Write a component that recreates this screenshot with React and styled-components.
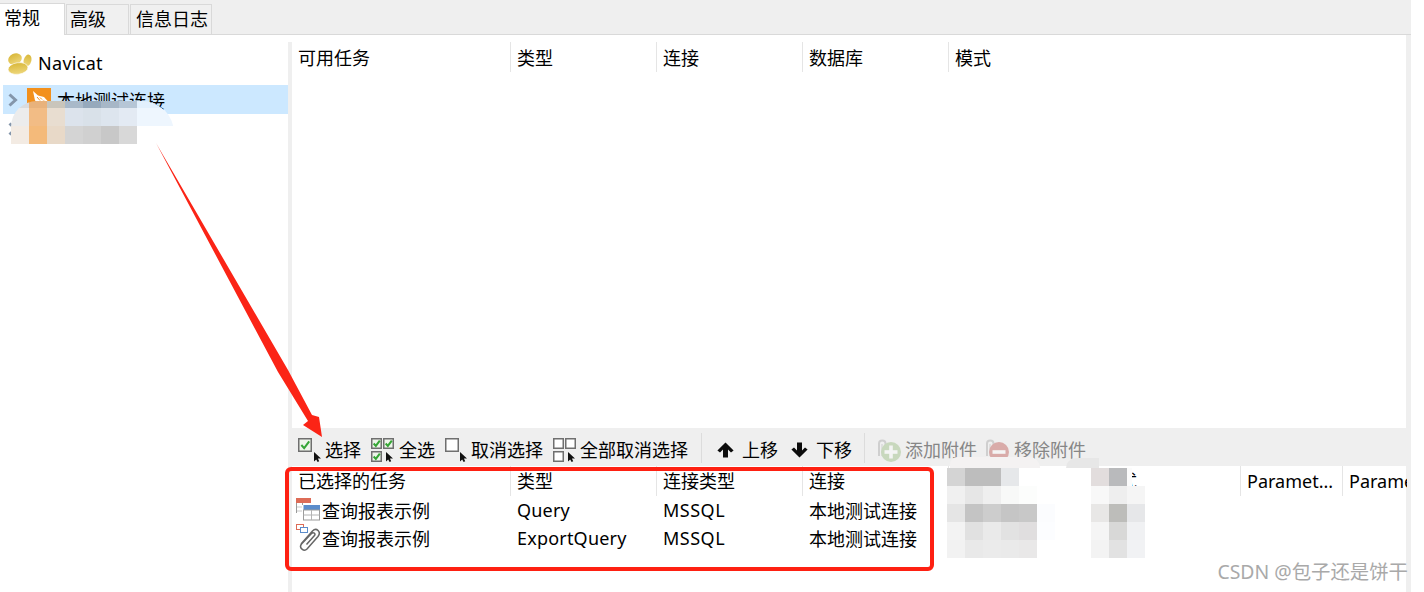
import React from 'react';
import styled, { createGlobalStyle } from 'styled-components';

const GlobalStyle = createGlobalStyle`
  html, body {
    margin: 0;
    padding: 0;
    background: #fff;
  }
  body {
    font-family: "Noto Sans", "Noto Sans CJK SC", sans-serif;
    font-size: 18px;
    color: #000;
  }
`;

const Page = styled.div`
  position: relative;
  width: 1424px;
  height: 592px;
  overflow: hidden;
  background: #fff;
`;

const Window = styled.div`
  width: 1411px;
  height: 592px;
  display: flex;
  flex-direction: column;
  background: #efefef;
`;

const TabBar = styled.div`
  height: 35px;
  box-sizing: border-box;
  display: flex;
  align-items: flex-end;
  border-bottom: 1px solid #d9d9d9;
`;

const Tab = styled.div`
  box-sizing: border-box;
  width: ${(p) => p.$width}px;
  height: ${(p) => (p.$active ? 32 : 30)}px;
  margin-bottom: ${(p) => (p.$active ? -1 : 0)}px;
  padding-left: ${(p) => p.$pad}px;
  margin-right: 1px;
  line-height: ${(p) => (p.$active ? 28 : 29)}px;
  background: ${(p) => (p.$active ? '#fff' : '#f0f0f0')};
  border-top: 1px solid #d9d9d9;
  border-right: 1px solid #d9d9d9;
  border-left: ${(p) => (p.$active ? 'none' : '1px solid #d9d9d9')};
`;

const Body = styled.div`
  flex: 1;
  display: flex;
  min-height: 0;
`;

const TreePanel = styled.div`
  width: 288px;
  box-sizing: border-box;
  padding: 14px 0 0 3px;
  background: #fff;
`;

const Splitter = styled.div`
  width: 4px;
  background: linear-gradient(#fff 0 7px, #efefef 7px);
`;

const TreeRow = styled.div`
  height: ${(p) => (p.$root ? 28 : 29)}px;
  margin-bottom: ${(p) => (p.$root ? 8 : 0)}px;
  display: flex;
  align-items: center;
  background: ${(p) => (p.$selected ? '#cce8ff' : 'transparent')};
  letter-spacing: ${(p) => (p.$root ? 0.3 : 0)}px;
  white-space: nowrap;
`;

const TreeIcon = styled.svg`
  flex: none;
  display: block;
  margin: ${(p) => p.$margin};
`;

const Content = styled.div`
  width: 1114px;
  display: flex;
  flex-direction: column;
`;

const TopList = styled.div`
  height: 393px;
  padding-top: 7px;
  box-sizing: border-box;
  background: #fff;
`;

const HeaderRow = styled.div`
  height: 30px;
  display: flex;
`;

const HeaderCell = styled.div`
  box-sizing: border-box;
  flex: none;
  width: ${(p) => p.$width}px;
  height: 30px;
  padding-left: 6px;
  line-height: ${(p) => p.$line ?? 30}px;
  overflow: hidden;
  white-space: nowrap;
  border-right: 1px solid #e5e5e5;

  &:last-child {
    border-right: none;
  }
`;

const Toolbar = styled.div`
  height: 38px;
  box-sizing: border-box;
  padding: 4px 0 0 5px;
  display: flex;
  align-items: center;
  background: #efefef;
`;

const Tool = styled.div`
  display: flex;
  align-items: center;
  gap: ${(p) => p.$gap ?? 4}px;
  margin-right: ${(p) => p.$after ?? 9}px;
  color: ${(p) => (p.$disabled ? '#868686' : '#000')};
  white-space: nowrap;
`;

const ToolIcon = styled.svg`
  display: block;
  flex: none;
  margin-top: ${(p) => p.$drop ?? 0}px;
`;

const ToolDivider = styled.div`
  width: 1px;
  height: 30px;
  margin: -3px ${(p) => p.$right}px 0 0;
  background: #dcdcdc;
`;

const BottomList = styled.div`
  flex: 1;
  background: #fff;
`;

const DataRow = styled.div`
  height: 28px;
  display: flex;
  align-items: center;
  white-space: nowrap;
`;

const NameCell = styled.div`
  width: 218px;
  box-sizing: border-box;
  padding-left: 4px;
  display: flex;
  align-items: center;
  gap: 2px;
`;

const DataCell = styled.div`
  width: 146px;
  box-sizing: border-box;
  padding-left: 7px;
  letter-spacing: ${(p) => p.$tracking ?? 0}px;
`;

const RowIcon = styled.svg`
  display: block;
  flex: none;
`;

const Mosaic = styled.div`
  position: absolute;
  left: ${(p) => p.$left}px;
  top: ${(p) => p.$top}px;
  display: grid;
  grid-template-columns: repeat(${(p) => p.$cols}, ${(p) => p.$cell}px);
  grid-auto-rows: ${(p) => p.$cell}px;
`;

const MosaicCell = styled.div`
  background: ${(p) => p.$color};
`;

const TreeSmudge = styled.div`
  position: absolute;
  left: 11px;
  top: 101px;
  width: 163px;
  height: 43px;
  overflow: hidden;
  border-radius: 26px 32px 0 0;
  display: grid;
  grid-template-columns: repeat(7, 18px) 37px;
  grid-template-rows: 7px 18px 18px;
`;

const Haze = styled.div`
  position: absolute;
  left: ${(p) => p.$left}px;
  top: ${(p) => p.$top}px;
  width: ${(p) => p.$width}px;
  height: ${(p) => p.$height}px;
  background: ${(p) => p.$color};
  border-radius: ${(p) => p.$radius};
`;

const RedFrame = styled.div`
  position: absolute;
  left: 285px;
  top: 467px;
  width: 649px;
  height: 104px;
  box-sizing: border-box;
  border: 4px solid #fe2012;
  border-radius: 6px;
  pointer-events: none;
`;

const ArrowLayer = styled.svg`
  position: absolute;
  left: 0;
  top: 0;
  pointer-events: none;
`;

const Watermark = styled.div`
  position: absolute;
  right: 16px;
  top: 559px;
  color: #a9a9a9;
  font-size: 19.4px;
  line-height: 26px;
  white-space: nowrap;
`;

const treeColors = [
  '#d9dbde', '#e8b27c', '#c9c5bb', '#a9b9c9', '#96a9bc', '#a7b7c7', '#b6c6d6', '#e2f0fd',
  '#ececec', '#f2bc85', '#e8ddd0', '#dce3ec', '#d9e1e9', '#dde5ee', '#e3eaf3', '#eef6fe',
  '#f3ebe3', '#f4ba7a', '#e8d9c8', '#d4d4d4', '#d0d0d0', '#c8c8c8', '#d8d8d8', 'transparent',
];

const blockA = [
  '#d4d4d4', '#bdbdbd', '#bdbdbd', '#e6e8ea', '#fff', '#fff',
  '#f0f0f0', '#e6e6e6', '#efefef', '#f8f9f8', '#fcfdfc', '#fff',
  '#e5e5e5', '#c4c4c4', '#cdcdcd', '#c5c5c5', '#c8c8c8', '#fbfcfe',
  '#f3f3f3', '#e1e1e1', '#eaeaea', '#e2e2e2', '#e0dedf', '#fcfdff',
  '#f2f2f2', '#e9e9e9', '#ebebeb', '#eaeaea', '#e9e8e8', '#fff',
];

const blockB = [
  '#e2dddd', '#b9babc', 'transparent',
  '#f8f8f8', '#eeeeee', '#f5f5f5',
  '#e8e7e6', '#bdbdba', '#e6e7e9',
  '#f5f5f5', '#d8d8d7', '#f0f1f3',
  '#f3f3f3', '#e2e2e2', '#f1f2f4',
];

const topColumns = [
  { title: '可用任务', width: 219 },
  { title: '类型', width: 146 },
  { title: '连接', width: 146 },
  { title: '数据库', width: 146 },
  { title: '模式', width: 146 },
];

const bottomColumns = [
  { title: '已选择的任务', width: 219 },
  { title: '类型', width: 146 },
  { title: '连接类型', width: 146 },
  { title: '连接', width: 146 },
  { title: '数据库', width: 146 },
  { title: '模式', width: 146 },
  { title: 'Paramet...', width: 102 },
  { title: 'Parameter', width: 64 },
];

const Pointer = ({ x, y }) => (
  <path
    transform={`translate(${x} ${y})`}
    d="M0 0V9.4L2.2 7.4L3.6 10L5.2 9.2L3.9 6.6L7 6.4Z"
    fill="#111"
  />
);

const Box = ({ x, y, size, checked }) => (
  <g>
    <rect x={x + 0.75} y={y + 0.75} width={size - 1.5} height={size - 1.5} fill={checked ? '#eef5ea' : '#fff'} stroke="#6f6f6f" strokeWidth="1.5" />
    {checked && (
      <path
        d={`M${x + size * 0.24} ${y + size * 0.5}L${x + size * 0.44} ${y + size * 0.72}L${x + size * 0.8} ${y + size * 0.24}`}
        fill="none"
        stroke="#35a635"
        strokeWidth="2"
      />
    )}
  </g>
);

const SingleBox = ({ checked, width }) => (
  <ToolIcon width={width} height={24} viewBox={`0 0 ${width} 24`} $drop={1}>
    <Box x={1} y={0} size={14} checked={checked} />
    <Pointer x={width - 7} y={14} />
  </ToolIcon>
);

const QuadBox = ({ checked, width }) => (
  <ToolIcon width={width} height={24} viewBox={`0 0 ${width} 24`} $drop={1}>
    <Box x={1} y={0} size={11} checked={checked} />
    <Box x={13} y={0} size={11} checked={checked} />
    <Box x={1} y={13} size={11} checked={checked} />
    <Pointer x={16} y={14} />
  </ToolIcon>
);

const BoldArrow = ({ down }) => (
  <ToolIcon width={17} height={16} viewBox="0 0 17 16" $drop={1}>
    <path
      transform={down ? 'rotate(180 8.5 8)' : undefined}
      d="M8.5 0.5L16.6 8.6L14 10.6L11 7.6V15.6H6V7.6L3 10.6L0.4 8.6Z"
      fill="#0c0c0c"
    />
  </ToolIcon>
);

const AttachIcon = ({ remove }) => (
  <ToolIcon width={25} height={24} viewBox="0 0 25 24" $drop={1}>
    <path d="M2 18V5.5C2 1.5 8.5 1.5 8.5 5.5V16" fill="none" stroke="#cfcfcf" strokeWidth="2" />
    <path d="M5 6V18" fill="none" stroke="#dadada" strokeWidth="1.5" />
    <circle cx="14" cy="14" r="10" fill={remove ? '#d9aba9' : '#c8d8bd'} />
    <rect x="7.5" y="12.2" width="13" height="3.6" fill="#f4f4f4" />
    {!remove && <rect x="12.2" y="7.5" width="3.6" height="13" fill="#f4f4f4" />}
  </ToolIcon>
);

const QueryIcon = () => (
  <RowIcon width="24" height="24" viewBox="0 0 24 24">
    <rect x="0" y="0" width="15" height="5" fill="#dd6c57" />
    <path d="M.5 5V15M6.5 5V7" stroke="#9a9a9a" fill="none" />
    <path d="M1 9H6M1 13H6" stroke="#c9c9c9" fill="none" />
    <rect x="7.5" y="7" width="17" height="5" fill="#5b8ccb" />
    <rect x="7.5" y="12" width="16" height="10" fill="#fff" stroke="#9b9b9b" />
    <path d="M15.5 12V22M7.5 17H23.5" stroke="#b4b4b4" fill="none" />
  </RowIcon>
);

const ExportIcon = () => (
  <RowIcon width="24" height="28" viewBox="0 0 24 28">
    <rect x=".5" y=".5" width="7" height="5" fill="#fff" stroke="#dd6c57" />
    <rect x="4.5" y="3.5" width="7" height="5" fill="#fff" stroke="#5b8ccb" />
    <path
      d="M5 20L16.5 7C20.5 3 25.5 8 22 12.5L11 25C8 28 2.5 24 5.5 20L15.5 9.5C17.5 7.5 20 9.8 18.5 11.5L10.5 20.5"
      fill="none"
      stroke="#666"
      strokeWidth="1.5"
    />
  </RowIcon>
);

const NavicatIcon = () => (
  <TreeIcon width="25" height="23" viewBox="0 0 25 23" $margin="0 6px 0 4px">
    <defs>
      <linearGradient id="gold" x1="0" y1="0" x2="0" y2="1">
        <stop offset="0" stopColor="#d9b83a" />
        <stop offset="1" stopColor="#eed77c" />
      </linearGradient>
    </defs>
    <ellipse cx="8" cy="7" rx="7" ry="5.5" transform="rotate(-25 8 7)" fill="url(#gold)" />
    <ellipse cx="20.5" cy="8.5" rx="3.8" ry="6" transform="rotate(15 20.5 8.5)" fill="url(#gold)" />
    <ellipse cx="11" cy="16.5" rx="10" ry="5.8" transform="rotate(-8 11 16.5)" fill="url(#gold)" stroke="#fff" strokeWidth=".6" />
  </TreeIcon>
);

const Chevron = () => (
  <TreeIcon width="10" height="14" viewBox="0 0 10 14" $margin="0 9px 0 5px">
    <path d="M1.5 1.5L7.5 7L1.5 12.5" fill="none" stroke="#8496ab" strokeWidth="3" />
  </TreeIcon>
);

const ConnectionIcon = () => (
  <TreeIcon width="24" height="24" viewBox="0 0 24 24" $margin="0 6px 0 0">
    <rect width="24" height="24" fill="#f2901d" />
    <path d="M6 3L11 7.5L17 9L21 13.5L16 12.5L13 16L8 12.5Z" fill="#fff" />
    <path d="M10 9L13 12.5M13 9.5L15 11.5" stroke="#f2901d" strokeWidth="1" fill="none" />
  </TreeIcon>
);

export default function App() {
  return (
    <Page>
      <GlobalStyle />
      <Window>
        <TabBar>
          <Tab $active $width={65} $pad={4}>常规</Tab>
          <Tab $width={63} $pad={3}>高级</Tab>
          <Tab $width={82} $pad={5}>信息日志</Tab>
        </TabBar>
        <Body>
          <TreePanel>
            <TreeRow $root>
              <NavicatIcon />
              Navicat
            </TreeRow>
            <TreeRow $selected>
              <Chevron />
              <ConnectionIcon />
              本地测试连接
            </TreeRow>
            <TreeRow>
              <Chevron />
            </TreeRow>
          </TreePanel>
          <Splitter />
          <Content>
            <TopList>
              <HeaderRow>
                {topColumns.map((c) => (
                  <HeaderCell key={c.title} $width={c.width} $line={32}>{c.title}</HeaderCell>
                ))}
              </HeaderRow>
            </TopList>
            <Toolbar>
              <Tool><SingleBox checked width={24} />选择</Tool>
              <Tool><QuadBox checked width={25} />全选</Tool>
              <Tool><SingleBox width={23} />取消选择</Tool>
              <Tool $after={13}><QuadBox width={24} />全部取消选择</Tool>
              <ToolDivider $right={15} />
              <Tool $gap={8} $after={13}><BoldArrow />上移</Tool>
              <Tool $gap={8} $after={12}><BoldArrow down />下移</Tool>
              <ToolDivider $right={12} />
              <Tool $disabled $gap={3} $after={8}><AttachIcon />添加附件</Tool>
              <Tool $disabled><AttachIcon remove />移除附件</Tool>
            </Toolbar>
            <BottomList>
              <HeaderRow>
                {bottomColumns.map((c) => (
                  <HeaderCell key={c.title} $width={c.width}>{c.title}</HeaderCell>
                ))}
              </HeaderRow>
              <DataRow>
                <NameCell><QueryIcon />查询报表示例</NameCell>
                <DataCell $tracking={0.2}>Query</DataCell>
                <DataCell $tracking={0.5}>MSSQL</DataCell>
                <DataCell>本地测试连接</DataCell>
              </DataRow>
              <DataRow>
                <NameCell><ExportIcon />查询报表示例</NameCell>
                <DataCell $tracking={0.2}>ExportQuery</DataCell>
                <DataCell $tracking={0.5}>MSSQL</DataCell>
                <DataCell>本地测试连接</DataCell>
              </DataRow>
            </BottomList>
          </Content>
        </Body>
      </Window>

      <TreeSmudge>
        {treeColors.map((color, i) => (
          <MosaicCell key={i} $color={color} />
        ))}
      </TreeSmudge>
      <Haze $left={950} $top={457} $width={90} $height={11} $color="#f4f2f2" $radius="20px 30px 0 0" />
      <Haze $left={1066} $top={458} $width={33} $height={10} $color="#e7e7e7" $radius="30px 0 0 0" />
      <Haze $left={1127} $top={468} $width={5} $height={18} $color="#fbfbfb" $radius="0" />
      <Mosaic $left={947} $top={468} $cols={6} $cell={18}>
        {blockA.map((color, i) => (
          <MosaicCell key={i} $color={color} />
        ))}
      </Mosaic>
      <Mosaic $left={1091} $top={468} $cols={3} $cell={18}>
        {blockB.map((color, i) => (
          <MosaicCell key={i} $color={color} />
        ))}
      </Mosaic>
      <RedFrame />
      <ArrowLayer width="1424" height="592" viewBox="0 0 1424 592">
        <polygon points="156,143 288,370 312,415 319,417 322,437 303,425 308,421 278,372" fill="#fb2416" />
      </ArrowLayer>
      <Watermark>CSDN @包子还是饼干</Watermark>
    </Page>
  );
}
